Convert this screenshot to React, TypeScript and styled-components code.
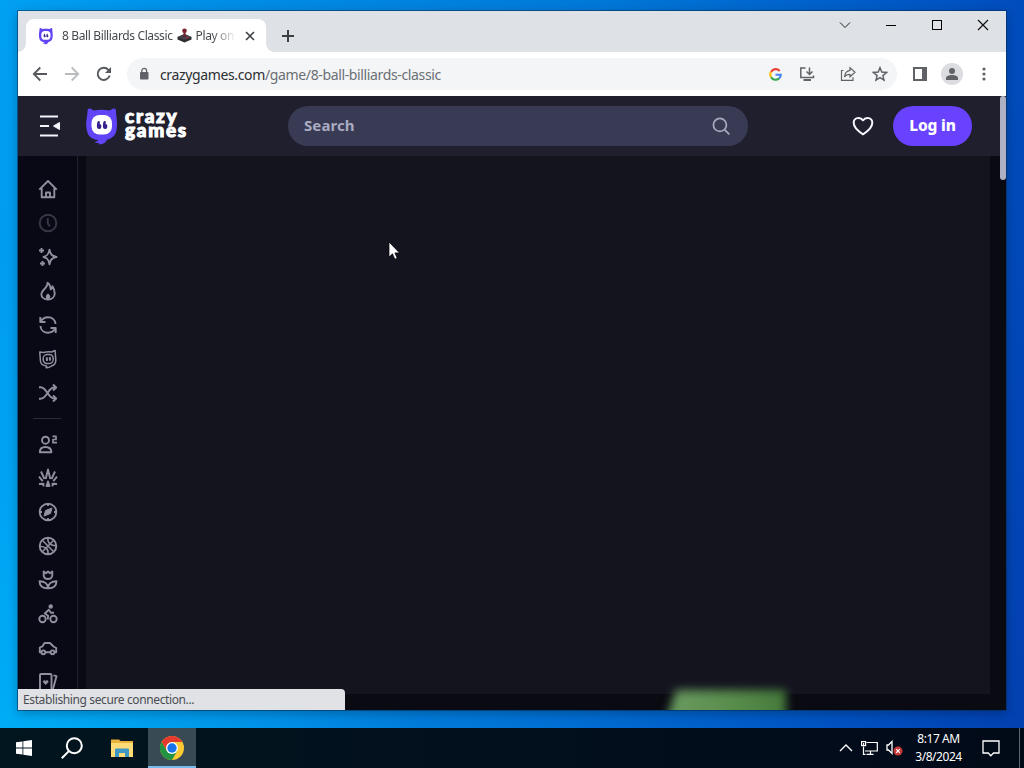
import React from 'react';
import styled, { createGlobalStyle } from 'styled-components';

const mainIcons = [
  {
    id: 'home',
    art: (
      <>
        <path d="M1.300 10.700 10 2l8.700 8.700M3.700 9v9.300h12.600V9" />
        <path d="M8 18v-4.500h4V18" />
      </>
    ),
  },
  {
    id: 'recent',
    dim: true,
    art: (
      <>
        <circle cx="10" cy="10" r="8.300" />
        <path d="M9.800 5v5.500l2.200 3" />
      </>
    ),
  },
  {
    id: 'new',
    art: (
      <>
        <path d="M11.500 2.700c.8 4.800 2.500 6.300 7 7.300-4.500 1-6.200 2.500-7 7.300-.8-4.800-2.300-6.300-6-7.300 3.700-1 5.200-2.500 6-7.300Z" />
        <path d="M3.500 1v5M1 3.500h5M4.500 14v5M2 16.500h5" />
      </>
    ),
  },
  {
    id: 'trending',
    art: (
      <>
        <path d="M9.500 1.800c.5 2-.7 3.500-2.300 5.400C5 9.500 3.300 10.800 3.300 13c0 3.500 3 5.500 6.700 5.500s6.700-2.300 6.700-6c0-2.700-.9-5.200-2.200-7.200-.2 1.500-.8 2.500-1.800 3-.1-2.700-1-5-3.200-6.500Z" />
        <path d="M10 12.500c-1.500 1.200-2.200 2-2.200 3.500 0 1.200 1 2.300 2.200 2.300s2.300-1.100 2.300-2.300c0-1.500-.8-2.300-2.300-3.500Z" fill="#9393a3" stroke="none" />
      </>
    ),
  },
  {
    id: 'updated',
    art: (
      <>
        <path d="M7.500 7H2.300V2M2.500 6.700C4.500 3.500 7 2.300 10 2.300c4.300 0 7.200 3 7.600 6.700" />
        <path d="M12.500 13h5.200v5M17.500 13.300c-2 3.200-4.500 4.400-7.500 4.400-4.300 0-7.200-3-7.600-6.700" />
      </>
    ),
  },
  {
    id: 'originals',
    art: (
      <g strokeWidth="1.500" transform="rotate(-4 10 10)">
        <path d="M2.300 2.500 6 3.200c2.700-.6 5.300-.6 8 0l3.700-1.200v9.500c0 3.200-2 5-4.700 5.700-1.800 1.300-3.700 1.700-5.500 1.500l.7-1.700c-3.500-.7-5.900-2.500-5.900-5.500Z" />
        <rect x="5.200" y="5.500" width="10" height="9" rx="4" />
        <path d="M8.900 8.300v3.500M11.900 8.300v3.500" strokeWidth="2" />
      </g>
    ),
  },
  {
    id: 'random',
    art: (
      <>
        <path d="M1 4.300h1.500C9 4.300 10 15.500 16 15.500h1.800M1 15.700h1.500C9 15.700 10 4.500 16 4.500h1.800" />
        <path d="m15 1.500 3.200 3L15 7.500M15 12.500l3.200 3-3.200 3" />
      </>
    ),
  },
];

const categoryIcons = [
  {
    id: 'two-player',
    art: (
      <>
        <circle cx="7.500" cy="6.200" r="3.500" />
        <path d="M1.800 18.300c0-3.300 2.200-5.300 5.700-5.300s5.900 2 5.900 5.300Z" />
        <path d="M14.500 2.300h3.500v3.200h-3v3.200h4" strokeWidth="1.700" />
      </>
    ),
  },
  {
    id: 'action',
    art: (
      <>
        <path d="m3 3.500 3.500 7.500M17 3.500 13.500 11M7.700 11 10 1.500l2.300 9.500M1 8.700l3.700 4.500M19 8.700l-3.700 4.500M1 16l4.500-.2-.2 2.500M19 16l-4.500-.2.2 2.500" />
        <path d="m10 13.500-1.500 4.500h3Z" fill="#9393a3" />
      </>
    ),
  },
  {
    id: 'adventure',
    art: (
      <>
        <circle cx="10" cy="10" r="8.300" />
        <path d="m14 6-1.500 5.500L6 14l1.500-5.500Z" fill="#9393a3" strokeWidth="1" />
        <path d="M10 2v2M10 16v2M2 10h2M16 10h2" />
      </>
    ),
  },
  {
    id: 'basketball',
    art: (
      <>
        <circle cx="10" cy="10" r="8.300" />
        <path d="m4.300 4.300 11.400 11.400M15.700 4.300 4.300 15.700M10 1.700c-.8 5 2.300 8 8.300 8.100M1.700 10.200c6 .1 9.100 3.100 8.300 8.100" strokeWidth="1.600" />
      </>
    ),
  },
  {
    id: 'beauty',
    art: (
      <>
        <path d="M5.700 1.500 8 3.300l2-1.800 2 1.800 2.300-1.800V5c0 2.500-1.800 4-4.300 4S5.700 7.500 5.700 5Z" />
        <path d="M10 18.300c0-4-3-7-8.500-7 .2 4.800 3.500 7.200 8.500 7ZM10 18.300c0-4 3-7 8.500-7-.2 4.800-3.500 7.200-8.500 7Z" />
      </>
    ),
  },
  {
    id: 'bike',
    art: (
      <>
        <circle cx="4.500" cy="15" r="3.200" />
        <circle cx="15.500" cy="15" r="3.200" />
        <circle cx="12.700" cy="2.500" r="1.300" fill="#9393a3" />
        <path d="m9.800 15.500.3-3.800-3.300-2.200 4-3.700 2.200 3h3" />
      </>
    ),
  },
  {
    id: 'car',
    art: (
      <>
        <path d="M3.300 14.300H1.800V9.500l2.700-1.200 2-3.300h5.500l3.500 3.500 2.700 1.500v4.300h-1.500M7.300 14.300h5" />
        <circle cx="5.300" cy="14.300" r="1.900" />
        <circle cx="14.500" cy="14.300" r="1.900" />
      </>
    ),
  },
  {
    id: 'card',
    art: (
      <>
        <rect x="2" y="2" width="11.500" height="17" rx="1" />
        <path d="m15.500 3.300 3 .9L15 17" />
        <path d="m7.700 12.700-2.400-2.500c-.8-1.700 1.500-2.500 2.400-1 .9-1.500 3.200-.7 2.400 1Z" fill="#9393a3" strokeWidth="0.500" />
      </>
    ),
  },
];

const Mascot = ({ width, height }: { width: number; height: number }) => (
  <svg width={width} height={height} viewBox="0 0 34 40">
    <path
      fill="#6044f5"
      d="M2.500 5c0-2.300 1.500-3 3.300-2.200L8.500 4.500c5.300-.9 10.700-.9 16 0l3.200-1.700C29.500 2 31 2.700 31 5c0 2.500.2 4.500.6 7 .6 4 .6 8-.1 12-1 5.500-4.500 8.500-9.500 9.700-.8 2.500-3.500 4.300-7.500 4.800l-.8-1.600c-1.800.2-3.300-.1-4.200-.9 1.800-.3 3.200-.9 4-1.800C6.500 33.300 2.700 30 1.800 24 1 20 1 16 1.700 12c.5-2.500.8-4.500.8-7Z"
    />
    <rect x="6.500" y="9" width="20.500" height="19.500" rx="8" fill="#fff" />
    <path
      fill="#3b238f"
      transform="rotate(180 17 18.700)"
      d="M12.300 15c2-1.300 3.800-.3 3.800 1.800 0 3-.3 5.700-1.900 5.700-1.300 0-1.300-1.300-.8-3-1.700 0-2.400-2.500-1.100-4.500ZM18.300 15c2-1.300 3.800-.3 3.800 1.800 0 3-.3 5.700-1.900 5.700-1.300 0-1.300-1.300-.8-3-1.700 0-2.400-2.500-1.100-4.500Z"
    />
  </svg>
);

const App = () => {
  return (
    <Desktop>
      <GlobalStyle />
      <Wallpaper>
        <BrowserWindow>
          <TabStrip>
            <Tab>
              <Mascot width={16} height={18} />
              <TabTitle>
                <span>8 Ball Billiards Classic</span>
                <svg width="15" height="15" viewBox="0 0 15 15">
                  <path d="M0.500 9 7.500 6l7 3v2.500l-7 3-7-3Z" fill="#2c2a2e" />
                  <path d="M0.500 9 7.500 6l7 3-7 3Z" fill="#45414a" />
                  <path d="M7.500 4v5" stroke="#70222e" strokeWidth="2" />
                  <circle cx="7.500" cy="2.800" r="2.300" fill="#7c2032" />
                  <path d="m9.500 10 1.800-.8" stroke="#b8293c" strokeWidth="1.300" />
                </svg>
                <span>Play on</span>
              </TabTitle>
              <svg width="10" height="10" viewBox="0 0 10 10" stroke="#3c4043" strokeWidth="1.600">
                <path d="m1 1 8 8M9 1 1 9" />
              </svg>
            </Tab>
            <NewTab>
              <svg width="14" height="14" viewBox="0 0 14 14" stroke="#3c4043" strokeWidth="2">
                <path d="M7 1v12M1 7h12" />
              </svg>
            </NewTab>
            <WindowControls>
              <ControlButton>
                <svg width="12" height="12" viewBox="0 0 12 12" fill="none" stroke="#222">
                  <path d="m1 3.500 5 5 5-5" />
                </svg>
              </ControlButton>
              <ControlButton>
                <svg width="12" height="12" viewBox="0 0 12 12" stroke="#000">
                  <path d="M1 6.500h10" />
                </svg>
              </ControlButton>
              <ControlButton>
                <svg width="12" height="12" viewBox="0 0 12 12" fill="none" stroke="#000">
                  <rect x="1.500" y="1.500" width="9" height="9" />
                </svg>
              </ControlButton>
              <ControlButton>
                <svg width="12" height="12" viewBox="0 0 12 12" stroke="#111" strokeWidth="1.200">
                  <path d="m1 1 10 10M11 1 1 11" />
                </svg>
              </ControlButton>
            </WindowControls>
          </TabStrip>

          <Toolbar>
            <ToolSlot>
              <svg width="16" height="16" viewBox="0 0 16 16" fill="none" stroke="#55595e" strokeWidth="1.800">
                <path d="M15 8H2M8.300 1.500 1.800 8l6.500 6.500" />
              </svg>
            </ToolSlot>
            <ToolSlot>
              <svg width="16" height="16" viewBox="0 0 16 16" fill="none" stroke="#b9bbbe" strokeWidth="1.800">
                <path d="M1 8h13M7.700 1.500 14.200 8l-6.500 6.500" />
              </svg>
            </ToolSlot>
            <ToolSlot>
              <svg width="16" height="16" viewBox="0 0 16 16" fill="none" stroke="#55595e" strokeWidth="1.900">
                <path d="M13.700 9.500A6.100 6.100 0 1 1 12.400 3.800L14 5.500" />
                <path d="M15 1v6H9Z" fill="#55595e" stroke="none" />
              </svg>
            </ToolSlot>
            <Omnibox>
              <svg width="10" height="14" viewBox="0 0 10 14">
                <rect x="1" y="5" width="8.500" height="7.500" rx="0.800" fill="#5f6368" />
                <path d="M2.800 5.500V3.800a2.400 2.400 0 0 1 4.800 0v1.700" fill="none" stroke="#5f6368" strokeWidth="1.300" />
              </svg>
              <Url>
                crazygames.com<span>/game/8-ball-billiards-classic</span>
              </Url>
              <ToolSlot>
                <svg width="13" height="13" viewBox="0 0 14 14" fill="none" strokeWidth="2.300">
                  <path d="M11.500 3.200A5.700 5.700 0 0 0 2.200 4.200" stroke="#ea4335" />
                  <path d="M2.200 4.200a5.700 5.700 0 0 0 0 5.700" stroke="#fbbc05" />
                  <path d="M2.200 9.900a5.700 5.700 0 0 0 8.700 1.300" stroke="#34a853" />
                  <path d="M10.900 11.200A5.500 5.500 0 0 0 12.700 7.300H7" stroke="#4285f4" />
                </svg>
              </ToolSlot>
              <ToolSlot>
                <svg width="16" height="16" viewBox="0 0 16 16" fill="none" stroke="#5f6368" strokeWidth="1.500">
                  <path d="M6.500 2H1.800v9.500h12.700V9.500" />
                  <path d="M4.500 14h7.500" strokeWidth="2" />
                  <path d="M10.500 1.500v7M7.500 5.500l3 3 3-3" />
                </svg>
              </ToolSlot>
              <ShareSlot>
                <svg width="16" height="16" viewBox="0 0 16 16" fill="none" stroke="#5f6368" strokeWidth="1.200">
                  <path d="M3.500 4.500h-2v9.800h11.500v-3" />
                  <path d="m10 1.800 5 4.500-5 4.500V8.300C7.300 8.300 5.700 9 4.500 11c.3-3.500 2-6.200 5.500-6.700Z" />
                </svg>
              </ShareSlot>
              <ToolSlot>
                <svg width="16" height="16" viewBox="0 0 16 16" fill="none" stroke="#5f6368" strokeWidth="1.500">
                  <path d="m8 1.700 1.800 4.400 4.700.4-3.600 3.100 1.100 4.600L8 11.700l-4 2.500 1.100-4.600-3.600-3.100 4.700-.4Z" />
                </svg>
              </ToolSlot>
            </Omnibox>
            <ToolSlot>
              <svg width="16" height="16" viewBox="0 0 16 16">
                <rect x="2" y="2" width="12" height="12" fill="none" stroke="#5f6368" strokeWidth="2" />
                <rect x="10" y="2" width="4.500" height="12" fill="#5f6368" />
              </svg>
            </ToolSlot>
            <ToolSlot>
              <Avatar>
                <svg width="14" height="14" viewBox="0 0 14 14" fill="#5f6368">
                  <circle cx="7" cy="4" r="3" />
                  <path d="M1 13v-2c0-2 3-3 6-3s6 1 6 3v2Z" />
                </svg>
              </Avatar>
            </ToolSlot>
            <ToolSlot>
              <svg width="4" height="14" viewBox="0 0 4 14" fill="#5f6368">
                <circle cx="2" cy="2" r="1.600" />
                <circle cx="2" cy="7" r="1.600" />
                <circle cx="2" cy="12" r="1.600" />
              </svg>
            </ToolSlot>
          </Toolbar>

          <Page>
            <SiteHeader>
              <MenuButton>
                <svg width="22" height="22" viewBox="0 0 22 22" stroke="#f4f4fb" strokeWidth="2">
                  <path d="M1 1.500h18M1 11h9M1 20.500h18" />
                  <path d="M20.500 7.500v7L14.500 11Z" fill="#f4f4fb" strokeWidth="1" strokeLinejoin="round" />
                </svg>
              </MenuButton>
              <Logo>
                <Mascot width={34} height={40} />
                <LogoText>
                  crazy
                  <br />
                  games
                </LogoText>
              </Logo>
              <SearchBox>
                <span>Search</span>
                <svg width="20" height="20" viewBox="0 0 20 20" fill="none" stroke="#a9abc0" strokeWidth="1.700" strokeLinecap="round">
                  <circle cx="8.900" cy="8.900" r="6.500" />
                  <path d="m13.800 13.800 4 4" />
                </svg>
              </SearchBox>
              <Favourites>
                <svg width="22" height="20" viewBox="0 0 22 20" fill="none" stroke="#f6f6ff" strokeWidth="2" strokeLinejoin="round">
                  <path d="M11 18.300C7 15.800 1.700 11.500 1.700 6.800c0-5 6.300-6.600 9.300-2.500 3-4.100 9.300-2.500 9.300 2.500 0 4.700-5.300 9-9.300 11.500Z" />
                </svg>
              </Favourites>
              <LoginButton>Log in</LoginButton>
            </SiteHeader>
            <SiteBody>
              <Sidebar>
                {mainIcons.map(({ id, dim, art }) => (
                  <SideItem key={id} $dim={dim}>
                    <SideIcon viewBox="0 0 20 20">{art}</SideIcon>
                  </SideItem>
                ))}
                <Divider />
                {categoryIcons.map(({ id, art }) => (
                  <SideItem key={id}>
                    <SideIcon viewBox="0 0 20 20">{art}</SideIcon>
                  </SideItem>
                ))}
              </Sidebar>
              <GameArea />
              <GlowLayer>
                <GreenGlow />
              </GlowLayer>
            </SiteBody>
            <ScrollThumb />
            <StatusBubble>Establishing secure connection...</StatusBubble>
          </Page>
        </BrowserWindow>
      </Wallpaper>

      <Taskbar>
        <TaskButton>
          <svg width="16" height="16" viewBox="0 0 16 16" fill="#fff">
            <path d="m0 2.300 6.500-.9v6.200H0ZM7.300 1.300 16 0v7.600H7.300ZM0 8.400h6.500v6.200L0 13.700ZM7.300 8.400H16V16l-8.700-1.300Z" />
          </svg>
        </TaskButton>
        <TaskButton>
          <svg width="22" height="22" viewBox="0 0 22 22" fill="none" stroke="#fff" strokeWidth="2">
            <circle cx="13.300" cy="8.700" r="7.500" />
            <path d="m8.100 13.900-7.300 7.300" />
          </svg>
        </TaskButton>
        <TaskButton $width={52}>
          <svg width="22" height="20" viewBox="0 0 22 20">
            <path d="M0 1.500h8l1.500 1.500H22v16H0Z" fill="#e9b23c" />
            <path d="M0 5h22v14H0Z" fill="#fddc78" />
            <path d="M4 19v-7.500a1 1 0 0 1 1-1h12a1 1 0 0 1 1 1V19h-4v-4H8v4Z" fill="#3f97c6" />
          </svg>
        </TaskButton>
        <TaskButton $active>
          <svg width="24" height="24" viewBox="0 0 24 24">
            <circle cx="12" cy="12" r="12" fill="#fcc934" />
            <path d="M1.600 6A12 12 0 0 1 22.400 6H12L6.800 15Z" fill="#e33b2e" />
            <path d="M1.600 6A12 12 0 0 0 12 24l5.200-9H6.800Z" fill="#229342" />
            <circle cx="12" cy="12" r="6" fill="#fff" />
            <circle cx="12" cy="12" r="4.700" fill="#1a73e8" />
          </svg>
        </TaskButton>
        <Tray>
          <svg width="14" height="8" viewBox="0 0 14 8" fill="none" stroke="#fff" strokeWidth="1.400">
            <path d="m1 7 6-6 6 6" />
          </svg>
          <svg width="17" height="14" viewBox="0 0 17 14" fill="none" stroke="#fff" strokeWidth="1.200">
            <path d="M5.500 1.500h10.800v8.500H4M5.500 13.300h7M9.500 10v3M2.500 5.500v7.800h2" />
            <rect x="0.600" y="0.600" width="4" height="4" />
            <path d="M2.600 2v2" />
          </svg>
          <svg width="17" height="16" viewBox="0 0 17 16">
            <path d="M1 5h1.500L6 1.500v12L2.500 10H1Z" fill="none" stroke="#fff" strokeWidth="1.300" />
            <circle cx="12" cy="11" r="4.500" fill="#c83838" />
            <path d="m10.200 9.200 3.600 3.600M13.800 9.200l-3.600 3.600" stroke="#fff" strokeWidth="1.200" />
          </svg>
          <Clock>
            <span>8:17 AM</span>
            <span>3/8/2024</span>
          </Clock>
          <svg width="18" height="17" viewBox="0 0 18 17" fill="none" stroke="#fff" strokeWidth="1.300">
            <path d="M1 1h16v12h-5.500L8.800 15.700 6.200 13H1Z" />
          </svg>
          <ShowDesktop />
        </Tray>
      </Taskbar>

      <Cursor width="12" height="20" viewBox="0 0 12 20">
        <path d="M1 1v15l3.500-3.200 2.300 5.400 2.400-1-2.300-5.300H11.500Z" fill="#fff" stroke="#000" strokeWidth="0.700" />
      </Cursor>
    </Desktop>
  );
};

export default App;

const GlobalStyle = createGlobalStyle`
  * {
    box-sizing: border-box;
  }
  body {
    margin: 0;
    overflow: hidden;
    font-family: 'Noto Sans', 'Open Sans', sans-serif;
  }
  svg {
    display: block;
    flex-shrink: 0;
  }
`;

const Desktop = styled.div`
  position: relative;
  display: flex;
  flex-direction: column;
  width: 1024px;
  height: 768px;
  overflow: hidden;
`;

const Wallpaper = styled.div`
  height: 728px;
  padding: 11px 18px 18px;
  background:
    radial-gradient(ellipse 420px 500px at 0 100%, rgba(0, 180, 250, 0.75), transparent),
    linear-gradient(100deg, #00a0f2 0%, #008de6 20%, #0078d8 52%, #0050c0 85%, #0340b0 100%);
`;

const BrowserWindow = styled.div`
  display: flex;
  flex-direction: column;
  height: 699px;
  box-shadow: 0 0 0 1px rgba(0, 45, 90, 0.55), 0 3px 10px rgba(0, 0, 0, 0.28);
`;

const TabStrip = styled.div`
  display: flex;
  height: 41px;
  padding-left: 8px;
  background-color: #dee1e6;
`;

const Tab = styled.div`
  position: relative;
  display: flex;
  align-items: center;
  width: 240px;
  height: 33px;
  margin-top: 8px;
  padding: 0 11px 0 12px;
  border-radius: 8px 8px 0 0;
  background-color: #fff;

  &::before,
  &::after {
    content: '';
    position: absolute;
    bottom: 0;
    width: 8px;
    height: 8px;
  }
  &::before {
    left: -8px;
    background: radial-gradient(circle at 0 0, transparent 7.5px, #fff 8px);
  }
  &::after {
    right: -8px;
    background: radial-gradient(circle at 100% 0, transparent 7.5px, #fff 8px);
  }
`;

const TabTitle = styled.div`
  display: flex;
  align-items: center;
  gap: 4px;
  width: 173px;
  margin: 0 10px 0 8px;
  overflow: hidden;
  white-space: nowrap;
  color: #45494d;
  font-size: 12px;
  letter-spacing: -0.37px;
  mask-image: linear-gradient(90deg, #000 150px, transparent 174px);
`;

const NewTab = styled.div`
  display: flex;
  align-items: center;
  justify-content: center;
  width: 28px;
  margin: 8px 0 0 8px;
`;

const WindowControls = styled.div`
  display: flex;
  height: 28px;
  margin-left: auto;
`;

const ControlButton = styled.div`
  display: flex;
  align-items: center;
  justify-content: center;
  width: 46px;
`;

const Toolbar = styled.div`
  display: flex;
  align-items: center;
  height: 44px;
  padding: 0 6px;
  background-color: #fff;
`;

const ToolSlot = styled.div`
  display: flex;
  flex-shrink: 0;
  align-items: center;
  justify-content: center;
  width: 32px;
  height: 32px;
`;

const ShareSlot = styled(ToolSlot)`
  margin-left: 9px;
`;

const Omnibox = styled.div`
  display: flex;
  flex: 1;
  align-items: center;
  height: 32px;
  margin: 0 7px;
  padding: 0 1px 0 12px;
  border-radius: 16px;
  background-color: #f4f5f6;
`;

const Url = styled.div`
  flex: 1;
  margin-left: 11px;
  color: #2c2f33;
  font-size: 14px;
  letter-spacing: -0.36px;
  white-space: nowrap;

  span {
    color: #6b6f74;
  }
`;

const Avatar = styled.div`
  display: flex;
  align-items: center;
  justify-content: center;
  width: 22px;
  height: 22px;
  border-radius: 50%;
  background-color: #dadce0;
`;

const Page = styled.div`
  position: relative;
  flex: 1;
  overflow: hidden;
  background-color: #0a0a12;
`;

const SiteHeader = styled.div`
  display: flex;
  align-items: center;
  height: 60px;
  padding: 0 34px 0 21px;
  background-color: #1f1f2e;
`;

const MenuButton = styled.div`
  width: 46px;
`;

const Logo = styled.div`
  display: flex;
  align-items: center;
  width: 203px;
`;

const LogoText = styled.div`
  margin: -7px 0 0 6px;
  color: #fff;
  font-family: Lato, sans-serif;
  font-size: 19px;
  font-weight: 900;
  line-height: 14px;
  letter-spacing: 1.7px;
  -webkit-text-stroke: 1px #fff;
`;

const SearchBox = styled.div`
  display: flex;
  align-items: center;
  justify-content: space-between;
  width: 460px;
  height: 40px;
  padding: 0 17px 0 16px;
  border-radius: 20px;
  background-color: #393a54;
  color: #a9abc0;
  font-size: 15px;
  font-weight: 700;
  letter-spacing: 0.1px;

  span {
    margin-top: -2px;
  }
`;

const Favourites = styled.div`
  margin-left: auto;
`;

const LoginButton = styled.div`
  display: flex;
  align-items: center;
  justify-content: center;
  width: 79px;
  height: 40px;
  margin-left: 19px;
  padding-bottom: 2px;
  border-radius: 20px;
  background-color: #6842ff;
  color: #fff;
  font-size: 15.5px;
  font-weight: 800;
  letter-spacing: -0.2px;
`;

const SiteBody = styled.div`
  position: relative;
  display: flex;
  height: 554px;
`;

const Sidebar = styled.div`
  flex-shrink: 0;
  width: 60px;
  padding-top: 16px;
  border-right: 1px solid #222330;
  background-color: #080914;
`;

const SideItem = styled.div<{ $dim?: boolean }>`
  display: flex;
  align-items: center;
  justify-content: center;
  height: 34px;
  padding-left: 1px;
  opacity: ${({ $dim }) => ($dim ? 0.35 : 1)};
`;

const SideIcon = styled.svg`
  width: 20px;
  height: 20px;
  fill: none;
  stroke: #9090a0;
  stroke-width: 1.9;
  stroke-linejoin: round;
`;

const Divider = styled.div`
  height: 1px;
  width: 28px;
  margin: 8px 0 8px 15px;
  background-color: #2b2c3a;
`;

const GameArea = styled.div`
  width: 904px;
  height: 538px;
  margin-left: 8px;
  background-color: #14141e;
`;

const GlowLayer = styled.div`
  position: absolute;
  top: 534px;
  left: 638px;
  filter: blur(5px);
`;

const GreenGlow = styled.div`
  width: 130px;
  height: 60px;
  background: linear-gradient(90deg, #66975c 20%, #588c4b 60%, #457a3c);
  clip-path: polygon(20px 0, 130px 0, 130px 60px, 0 60px);
`;

const ScrollThumb = styled.div`
  position: absolute;
  top: 0;
  right: 0;
  width: 6px;
  height: 84px;
  border-radius: 3px;
  background-color: #aeb1c2;
`;

const StatusBubble = styled.div`
  position: absolute;
  bottom: 0;
  left: 0;
  width: 327px;
  height: 21px;
  padding-left: 5px;
  border-top-right-radius: 4px;
  background-color: #e0e2e6;
  color: #4a4d52;
  font-size: 12px;
  line-height: 21px;
  letter-spacing: -0.38px;
`;

const Taskbar = styled.div`
  display: flex;
  height: 40px;
  background: linear-gradient(90deg, #02161f, #020e1c 60%, #020a18);
`;

const TaskButton = styled.div<{ $active?: boolean; $width?: number }>`
  display: flex;
  align-items: center;
  justify-content: center;
  width: ${({ $width }) => $width ?? 48}px;
  background-color: ${({ $active }) => ($active ? '#384a54' : 'transparent')};
  box-shadow: ${({ $active }) => ($active ? 'inset 0 -2px #76b9ed' : 'none')};
`;

const Tray = styled.div`
  display: flex;
  align-items: center;
  gap: 8px;
  margin-left: auto;
`;

const Clock = styled.div`
  display: flex;
  flex-direction: column;
  align-items: center;
  width: 55px;
  margin-right: 8px;
  color: #fff;
  font-size: 12px;
  line-height: 18px;
  letter-spacing: -0.45px;
`;

const ShowDesktop = styled.div`
  width: 5px;
  height: 40px;
  margin-left: 11px;
  border-left: 1px solid #5c6670;
`;

const Cursor = styled.svg`
  position: absolute;
  top: 241px;
  left: 388px;
`;
